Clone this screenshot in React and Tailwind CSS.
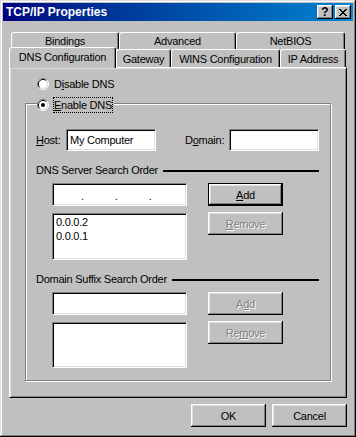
const RAISED =
  "shadow-[inset_-1px_-1px_#000,inset_1px_1px_#fff,inset_-2px_-2px_#808080,inset_2px_2px_#dfdfdf]";
const SUNKEN =
  "bg-white border border-t-[#808080] border-l-[#808080] border-r-white border-b-white shadow-[inset_1px_1px_#000,inset_-1px_-1px_#dfdfdf]";
const DISABLED_TEXT = "text-[#808080] [text-shadow:1px_1px_0_#fff]";

function Radio({ checked }) {
  return (
    <svg width="12" height="12" viewBox="0 0 12 12" className="shrink-0">
      <path d="M2.11 9.89A5.5 5.5 0 0 1 9.89 2.11" stroke="#808080" fill="none" />
      <path d="M9.89 2.11A5.5 5.5 0 0 1 2.11 9.89" stroke="#fff" fill="none" />
      <path d="M2.82 9.18A4.5 4.5 0 0 1 9.18 2.82" stroke="#000" fill="none" />
      <path d="M9.18 2.82A4.5 4.5 0 0 1 2.82 9.18" stroke="#dfdfdf" fill="none" />
      <circle cx="6" cy="6" r="4" fill="#fff" />
      {checked && <circle cx="6" cy="6" r="2" fill="#000" />}
    </svg>
  );
}

function XGlyph() {
  return (
    <svg width="8" height="7" viewBox="0 0 8 7" shapeRendering="crispEdges">
      <path
        d="M0 0h2v1H0z M6 0h2v1H6z M1 1h2v1H1z M5 1h2v1H5z M2 2h4v1H2z M3 3h2v1H3z M2 4h4v1H2z M1 5h2v1H1z M5 5h2v1H5z M0 6h2v1H0z M6 6h2v1H6z"
        fill="#000"
      />
    </svg>
  );
}

function TitleBtn({ children }) {
  return (
    <div
      className={
        "w-[16px] h-[14px] bg-[#c0c0c0] flex items-center justify-center " + RAISED
      }
    >
      {children}
    </div>
  );
}

function Tab({ className, children }) {
  return (
    <div
      className={
        "h-full flex justify-center bg-[#c0c0c0] border-t border-l border-white border-r border-r-black rounded-t-[3px] shadow-[inset_-1px_0_#808080] whitespace-nowrap " +
        className
      }
    >
      {children}
    </div>
  );
}

function Btn({ children, def, disabled, className }) {
  if (def) {
    return (
      <div className={"border border-black bg-[#c0c0c0] " + className}>
        <div className={"w-full h-full flex items-center justify-center " + RAISED}>
          {children}
        </div>
      </div>
    );
  }
  return (
    <div
      className={
        "bg-[#c0c0c0] flex items-center justify-center " +
        RAISED +
        " " +
        (disabled ? DISABLED_TEXT + " " : "") +
        className
      }
    >
      {children}
    </div>
  );
}

function SectionLabel({ className, children }) {
  return (
    <div className={"h-[14px] flex items-center " + className}>
      <span className="whitespace-nowrap">{children}</span>
      <div className="flex-1 h-[2px] bg-black ml-[5px] mt-[2px]" />
    </div>
  );
}

export default function App() {
  return (
    <div className="w-[356px] h-[437px] bg-[#c0c0c0] p-[3px] shadow-[inset_-1px_-1px_#000,inset_1px_1px_#dfdfdf,inset_-2px_-2px_#808080,inset_2px_2px_#fff] font-['Liberation_Sans',Arial,sans-serif] text-[11px] tracking-[-0.25px] leading-[14px] text-black flex flex-col">
      {/* Title bar */}
      <div className="h-[18px] shrink-0 flex items-center justify-between bg-linear-to-r from-[#000080] to-[#1084d0] pl-[3px] pr-[2px]">
        <span className="text-white font-bold text-[12px] tracking-[0px]">TCP/IP Properties</span>
        <div className="flex gap-[2px]">
          <TitleBtn>
            <span className="font-bold text-[12px] leading-[12px] tracking-[0px]">?</span>
          </TitleBtn>
          <TitleBtn>
            <XGlyph />
          </TitleBtn>
        </div>
      </div>

      <div className="px-[6px] pt-[11px] flex flex-col">
        {/* Tabs, back row */}
        <div className="flex pl-[2px] h-[17px]">
          <Tab className="w-[108px] pt-[1px]">Bindings</Tab>
          <Tab className="w-[117px] pt-[1px]">Advanced</Tab>
          <Tab className="w-[109px] pt-[1px]">NetBIOS</Tab>
        </div>
        {/* Tabs, front row */}
        <div className="flex h-[18px] items-end">
          <div className="relative z-10 w-[107px] h-[21px] -mt-[2px] -mb-px flex justify-center pt-[2px] bg-[#c0c0c0] border-t border-l border-white border-r border-r-black rounded-t-[3px] shadow-[inset_-1px_0_#808080] whitespace-nowrap">
            DNS Configuration
          </div>
          <Tab className="w-[55px] pt-[2px]">Gateway</Tab>
          <Tab className="w-[109px] pt-[2px]">WINS Configuration</Tab>
          <Tab className="w-[66px] pt-[2px]">IP Address</Tab>
        </div>

        {/* Tab page */}
        <div className="h-[331px] bg-[#c0c0c0] border border-t-white border-l-white border-r-black border-b-black shadow-[inset_1px_1px_#dfdfdf,inset_-1px_-1px_#808080] pl-[15px] pt-[8px] flex flex-col">
          <div className="h-[16px] pl-[12px] flex items-center gap-[5px]">
            <Radio />
            <span>
              D<span className="underline">i</span>sable DNS
            </span>
          </div>

          {/* Group box */}
          <div className="mt-[11px] w-[306px] h-[278px] border border-[#808080] shadow-[inset_1px_1px_#fff,1px_1px_#fff] flex flex-col">
            <div className="-mt-[7px] ml-[11px] h-[16px] w-fit flex items-center gap-[4px] bg-[#c0c0c0] pr-[1px]">
              <Radio checked />
              <span className="h-[16px] border border-dotted border-black leading-[14px]">
                <span className="underline">E</span>nable DNS
              </span>
            </div>

            <div className="pl-[10px] pr-[11px] flex flex-col">
              {/* Host / Domain */}
              <div className="mt-[16px] h-[22px] flex items-center">
                <span className="w-[30px]">
                  <span className="underline">H</span>ost:
                </span>
                <div className={"w-[90px] h-[22px] pl-[3px] flex items-center " + SUNKEN}>
                  My Computer
                </div>
                <span className="ml-[29px] w-[44px]">
                  D<span className="underline">o</span>main:
                </span>
                <div className={"w-[90px] h-[22px] " + SUNKEN} />
              </div>

              {/* DNS Server Search Order */}
              <SectionLabel className="mt-[12px]">DNS Server Search Order</SectionLabel>
              <div className="mt-[6px] flex">
                <div className="ml-[16px] w-[135px] flex flex-col">
                  <div className={"h-[23px] pl-[28px] pt-[2px] flex items-center gap-[31px] " + SUNKEN}>
                    <span>.</span>
                    <span>.</span>
                    <span>.</span>
                  </div>
                  <div className={"mt-[7px] h-[47px] pl-[3px] pt-[1px] flex flex-col " + SUNKEN}>
                    <span>0.0.0.2</span>
                    <span>0.0.0.1</span>
                  </div>
                </div>
                <div className="ml-[21px] w-[75px] flex flex-col">
                  <Btn def className="h-[23px]">
                    <span>
                      <span className="underline">A</span>dd
                    </span>
                  </Btn>
                  <Btn disabled className="mt-[6px] h-[23px]">
                    <span>
                      <span className="underline">R</span>emove
                    </span>
                  </Btn>
                </div>
              </div>

              {/* Domain Suffix Search Order */}
              <SectionLabel className="mt-[12px]">Domain Suffix Search Order</SectionLabel>
              <div className="mt-[6px] flex">
                <div className="ml-[16px] w-[135px] flex flex-col">
                  <div className={"h-[23px] " + SUNKEN} />
                  <div className={"mt-[7px] h-[46px] " + SUNKEN} />
                </div>
                <div className="ml-[21px] w-[75px] flex flex-col">
                  <Btn disabled className="h-[23px]">
                    <span>
                      A<span className="underline">d</span>d
                    </span>
                  </Btn>
                  <Btn disabled className="mt-[6px] h-[23px]">
                    <span>
                      Re<span className="underline">m</span>ove
                    </span>
                  </Btn>
                </div>
              </div>
            </div>
          </div>
        </div>

        {/* Dialog buttons */}
        <div className="mt-[6px] flex justify-end gap-[6px]">
          <Btn className="w-[75px] h-[23px]">OK</Btn>
          <Btn className="w-[75px] h-[23px]">Cancel</Btn>
        </div>
      </div>
    </div>
  );
}
